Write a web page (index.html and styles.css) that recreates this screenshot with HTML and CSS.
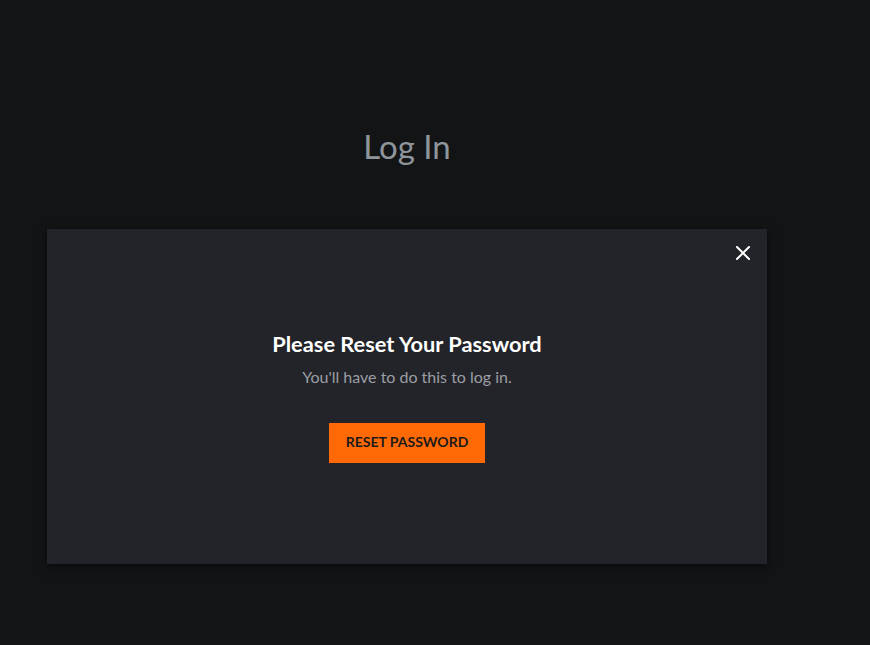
FILE: index.html
```html
<!DOCTYPE html>
<html>
<head>
<meta charset="utf-8">
<link rel="stylesheet" href="styles.css">
</head>
<body>
<div class="page">
  <h1 class="title">Log In</h1>
  <div class="modal">
    <button class="close" aria-label="Close">
      <svg width="14" height="14" viewBox="0 0 14 14"><path d="M1 1L13 13M13 1L1 13" stroke="#fff" stroke-width="2" stroke-linecap="square"/></svg>
    </button>
    <h2 class="heading">Please Reset Your Password</h2>
    <p class="sub">You'll have to do this to log in.</p>
    <button class="reset">RESET PASSWORD</button>
  </div>
</div>
</body>
</html>
```
FILE: styles.css
```css
html, body { margin: 0; padding: 0; }
body {
  background: #131416;
  font-family: Lato, "Open Sans", sans-serif;
  width: 870px;
  height: 645px;
  overflow: hidden;
}
.page {
  width: 814px;
  display: flex;
  flex-direction: column;
  align-items: center;
}
.title {
  margin: 124px 0 0;
  font-size: 33px;
  font-weight: 400;
  color: #8e969c;
  line-height: 44px;
  height: 105px;
}
.modal {
  position: relative;
  width: 720px;
  height: 335px;
  background: #232429;
  box-shadow: 0 2px 8px rgba(0,0,0,0.6);
  display: flex;
  flex-direction: column;
  align-items: center;
  box-sizing: border-box;
  padding-top: 100px;
}
.close {
  position: absolute;
  top: 17px;
  right: 17px;
  background: none;
  border: 0;
  padding: 0;
  width: 14px;
  height: 14px;
  display: flex;
}
.heading {
  margin: 0;
  font-size: 21.8px;
  font-weight: 700;
  color: #ffffff;
  line-height: 30px;
}
.sub {
  margin: 7px 0 0;
  font-size: 16px;
  color: #9b9ea4;
  line-height: 22px;
}
.reset {
  margin-top: 35px;
  width: 156px;
  height: 40px;
  background: #ff6a06;
  border: 0;
  font-family: Lato, sans-serif;
  font-weight: 700;
  font-size: 14px;
  color: #1b1b1b;
  padding: 0 0 3px;
}
```
